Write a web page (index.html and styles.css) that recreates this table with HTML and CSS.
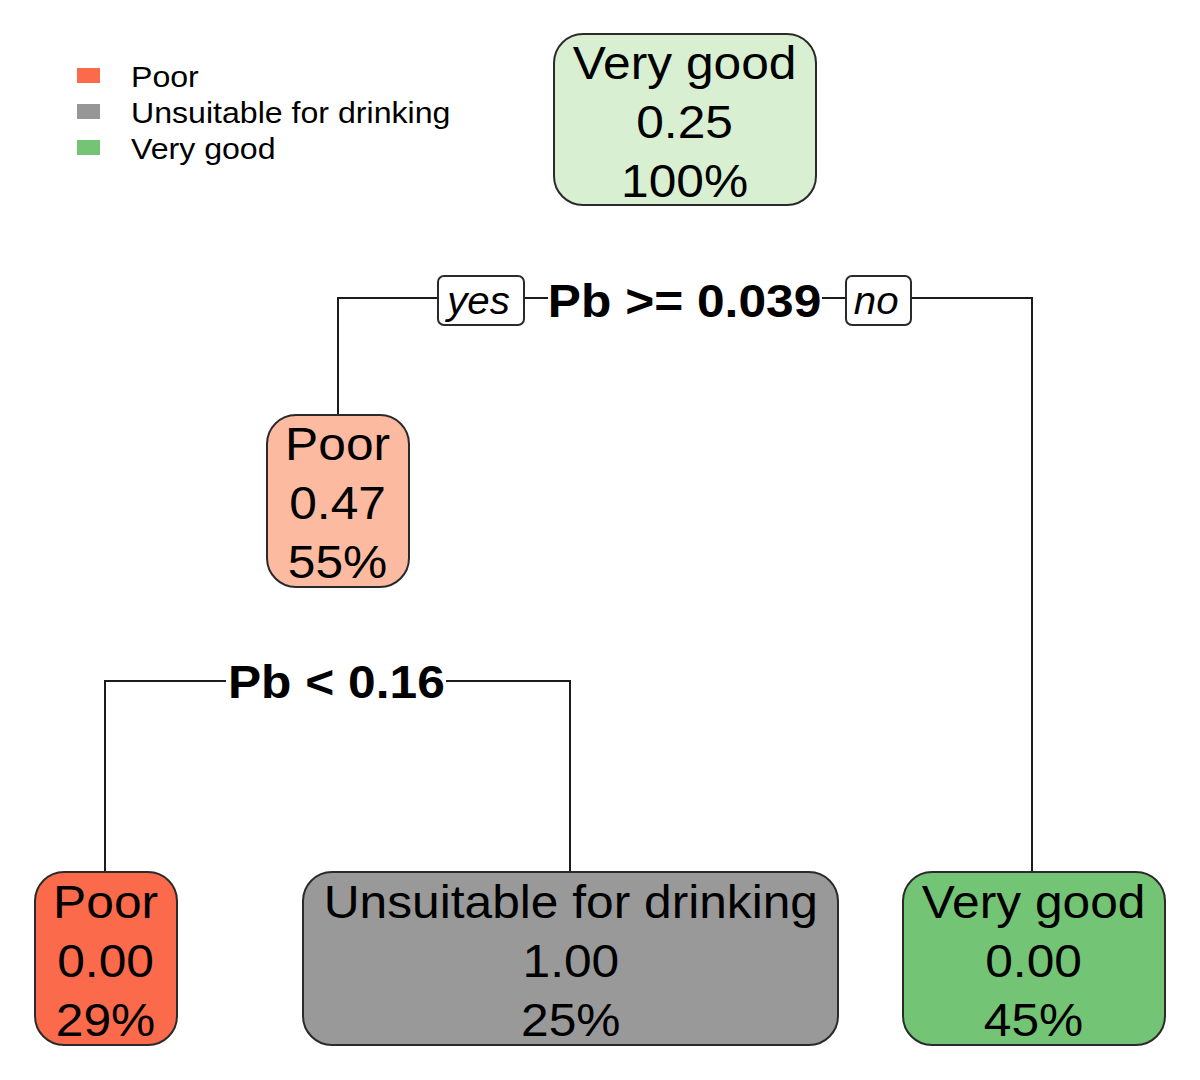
FILE: index.html
```html
<!DOCTYPE html>
<html lang="en">
<head>
<meta charset="utf-8">
<title>Decision tree</title>
<link rel="stylesheet" href="styles.css">
</head>
<body>
<div class="canvas">
  <svg class="edges" width="1200" height="1080" viewBox="0 0 1200 1080" aria-hidden="true">
    <path d="M338 414 V298 H1032 V871" />
    <path d="M105 871 V681 H570 V871" />
  </svg>

  <ul class="legend">
    <li class="legend-row"><span class="swatch swatch-poor"></span><span class="legend-label">Poor</span></li>
    <li class="legend-row"><span class="swatch swatch-unsuit"></span><span class="legend-label">Unsuitable for drinking</span></li>
    <li class="legend-row"><span class="swatch swatch-good"></span><span class="legend-label">Very good</span></li>
  </ul>

  <div class="node n-root">
    <div class="lines"><span>Very good</span><span>0.25</span><span>100%</span></div>
  </div>

  <div class="split split-top">
    <div class="tag tag-yes"><span>yes</span></div>
    <div class="cond cond-top"><span>Pb &gt;= 0.039</span></div>
    <div class="tag tag-no"><span>no</span></div>
  </div>

  <div class="node n-mid">
    <div class="lines"><span>Poor</span><span>0.47</span><span>55%</span></div>
  </div>

  <div class="split split-bottom">
    <div class="cond cond-bottom"><span>Pb &lt; 0.16</span></div>
  </div>

  <div class="node n-poor">
    <div class="lines"><span>Poor</span><span>0.00</span><span>29%</span></div>
  </div>

  <div class="node n-unsuit">
    <div class="lines"><span>Unsuitable for drinking</span><span>1.00</span><span>25%</span></div>
  </div>

  <div class="node n-good">
    <div class="lines"><span>Very good</span><span>0.00</span><span>45%</span></div>
  </div>
</div>
</body>
</html>
```

FILE: styles.css
```css
html, body {
  margin: 0;
  padding: 0;
  background: #ffffff;
}

.canvas {
  position: relative;
  width: 1200px;
  height: 1080px;
  overflow: hidden;
  font-family: "Liberation Sans", Arial, sans-serif;
  color: #000;
}

.edges {
  position: absolute;
  left: 0;
  top: 0;
}

.edges path {
  fill: none;
  stroke: #1c1c1c;
  stroke-width: 2;
}

/* Legend */
.legend {
  position: absolute;
  left: 77px;
  top: 59px;
  margin: 0;
  padding: 0;
  list-style: none;
}

.legend-row {
  display: flex;
  align-items: center;
  height: 36px;
}

.swatch {
  width: 23px;
  height: 15px;
  margin-right: 31px;
  margin-top: -4px;
  flex: none;
}

.swatch-poor { background: #fb6a4a; }
.swatch-unsuit { background: #969696; }
.swatch-good { background: #74c476; }

.legend-label {
  display: inline-block;
  font-size: 30px;
  line-height: 36px;
  white-space: nowrap;
  transform: scaleX(1.07);
  transform-origin: left center;
}

/* Nodes */
.node {
  position: absolute;
  box-sizing: border-box;
  border: 2px solid #2a2a2a;
  border-radius: 30px;
  padding-top: 5px;
  display: flex;
  align-items: center;
  justify-content: center;
  font-size: 46px;
  line-height: 59px;
}

.lines {
  display: flex;
  flex-direction: column;
  align-items: center;
  white-space: nowrap;
  transform: scaleX(1.08);
}

.n-root {
  left: 553px;
  top: 33px;
  width: 264px;
  height: 173px;
  background: #d8efd1;
}

.n-mid {
  left: 266px;
  top: 414px;
  width: 144px;
  height: 174px;
  background: #fcbba1;
}

.n-poor {
  left: 34px;
  top: 871px;
  width: 144px;
  height: 175px;
  background: #fb6a4a;
}

.n-unsuit {
  left: 302px;
  top: 871px;
  width: 537px;
  height: 175px;
  background: #999999;
}

.n-good {
  left: 902px;
  top: 871px;
  width: 264px;
  height: 175px;
  background: #74c476;
}

/* Split labels */
.split {
  position: absolute;
  display: flex;
  align-items: center;
}

.split-top {
  left: 437px;
  top: 275px;
  height: 51px;
}

.split-bottom {
  left: 226px;
  top: 656px;
  height: 52px;
}

.tag {
  box-sizing: border-box;
  height: 51px;
  border: 2px solid #2a2a2a;
  border-radius: 7px;
  background: #fff;
  display: flex;
  align-items: center;
  justify-content: center;
  font-style: italic;
  font-size: 38px;
  line-height: 44px;
}

.tag span {
  display: inline-block;
  transform: scaleX(1.06);
  margin-left: -4px;
}

.tag-yes { width: 88px; }
.tag-no { width: 67px; }

.cond {
  background: #fff;
  font-weight: bold;
  font-size: 46px;
  line-height: 52px;
  text-align: center;
  white-space: nowrap;
}

.cond span {
  display: inline-block;
  transform: scaleX(1.08);
}

.cond-top {
  width: 274px;
  margin: 0 23px;
}

.cond-bottom {
  width: 220px;
}
```
